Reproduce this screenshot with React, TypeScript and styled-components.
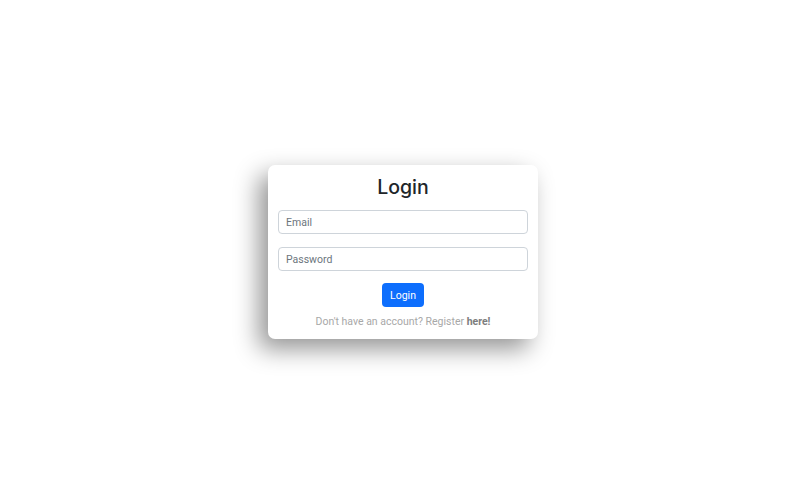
import styled, { createGlobalStyle } from "styled-components";

const GlobalStyle = createGlobalStyle`
  html, body {
    margin: 0;
    padding: 0;
    background: #fff;
    font-family: Inter, "Noto Sans", sans-serif;
  }
  * {
    box-sizing: border-box;
  }
`;

const Page = styled.div`
  width: 100vw;
  height: 100vh;
  display: flex;
  align-items: center;
  justify-content: center;
`;

const Card = styled.form`
  width: 270px;
  padding: 10px;
  background: #fff;
  border-radius: 7px;
  box-shadow: -9px 10px 24px rgba(0, 0, 0, 0.42);
  display: flex;
  flex-direction: column;
  align-items: center;
  font-family: Roboto, "Noto Sans", sans-serif;
`;

const Title = styled.h2`
  margin: 0 0 11px;
  font-family: Inter, "Noto Sans", sans-serif;
  font-size: 19.5px;
  line-height: 24px;
  font-weight: 500;
  color: #212529;
`;

const Input = styled.input<{ $gap?: number }>`
  width: 100%;
  height: 24px;
  margin-bottom: ${({ $gap }) => $gap ?? 0}px;
  padding: 0 7px;
  border: 1px solid #ced4da;
  border-radius: 4px;
  font-family: inherit;
  font-size: 10.5px;
  color: #212529;
  outline: none;
  &::placeholder {
    color: #6c757d;
  }
`;

const Button = styled.button`
  height: 24px;
  padding: 0 8px;
  margin-bottom: 7px;
  border: none;
  border-radius: 4px;
  background: #0d6efd;
  color: #fff;
  font-family: inherit;
  font-size: 10.5px;
  cursor: pointer;
`;

const Footer = styled.p`
  margin: 0;
  font-size: 10.5px;
  line-height: 15px;
  color: #a8a8a8;
  b {
    color: #7d7d7d;
    font-weight: 700;
  }
`;

export default function App() {
  return (
    <>
      <GlobalStyle />
      <Page>
        <Card onSubmit={(e) => e.preventDefault()}>
          <Title>Login</Title>
          <Input type="email" placeholder="Email" $gap={13} />
          <Input type="password" placeholder="Password" $gap={12} />
          <Button type="submit">Login</Button>
          <Footer>
            Don't have an account? Register <b>here!</b>
          </Footer>
        </Card>
      </Page>
    </>
  );
}
